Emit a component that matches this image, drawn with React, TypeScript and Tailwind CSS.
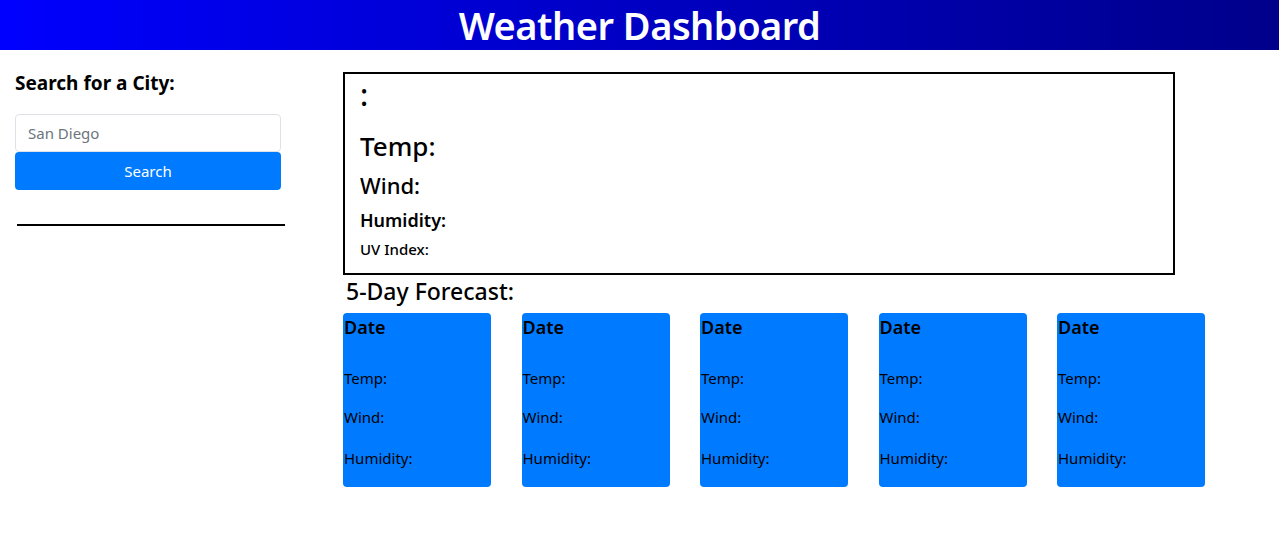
import React from 'react';

const days = [0, 1, 2, 3, 4];

const App: React.FC = () => {
  return (
    <div className="min-h-screen bg-white text-black" style={{ fontFamily: '"Noto Sans", "Open Sans", sans-serif' }}>
      <header className="h-[50px] bg-gradient-to-r from-[#0000ff] to-[#00008b] flex items-center justify-center">
        <h1 className="text-[38px] font-semibold text-white leading-none tracking-[-0.5px]">Weather Dashboard</h1>
      </header>

      <div className="flex">
        <aside className="w-[343px] shrink-0 pl-[15px] pt-[21px]">
          <h5 className="text-[19px] font-bold leading-[24px]">Search for a City:</h5>
          <div className="w-[266px] mt-[19px]">
            <input
              type="text"
              placeholder="San Diego"
              className="w-full h-[38px] px-[12px] border border-[#dee2e6] rounded-[4px] text-[15px] placeholder:text-[#6c757d] outline-none"
            />
            <button className="w-full h-[38px] bg-[#007bff] text-white text-[15px] rounded-[4px]">
              Search
            </button>
          </div>
          <hr className="w-[268px] ml-[2px] mt-[34px] border-t-2 border-black" />
        </aside>

        <main className="pt-[22px]">
          <div className="w-[832px] h-[203px] border-2 border-black px-[15px] pt-[2px]">
            <h2 className="text-[30px] font-medium leading-[38px]">:</h2>
            <h3 className="text-[26px] font-medium leading-[32px] mt-[16px]">Temp:</h3>
            <h4 className="text-[22px] font-medium leading-[28px] mt-[9px]">Wind:</h4>
            <h5 className="text-[18px] font-semibold leading-[24px] mt-[9px]">Humidity:</h5>
            <h6 className="text-[15px] font-medium leading-[20px] mt-[7px]">UV Index:</h6>
          </div>

          <h4 className="text-[23px] font-medium leading-[28px] ml-[3px] mt-[2px]">5-Day Forecast:</h4>

          <div className="w-[862px] flex justify-between mt-[8px]">
            {days.map((d) => (
              <div key={d} className="w-[148px] h-[174px] bg-[#007bff] rounded-[4px] pl-[1px] pt-[2px]">
                <h5 className="text-[18px] font-semibold leading-[24px]">Date</h5>
                <p className="text-[15px] leading-[24px] mt-[27px]">Temp:</p>
                <p className="text-[15px] leading-[24px] mt-[15px]">Wind:</p>
                <p className="text-[15px] leading-[24px] mt-[17px]">Humidity:</p>
              </div>
            ))}
          </div>
        </main>
      </div>
    </div>
  );
};

export default App;
